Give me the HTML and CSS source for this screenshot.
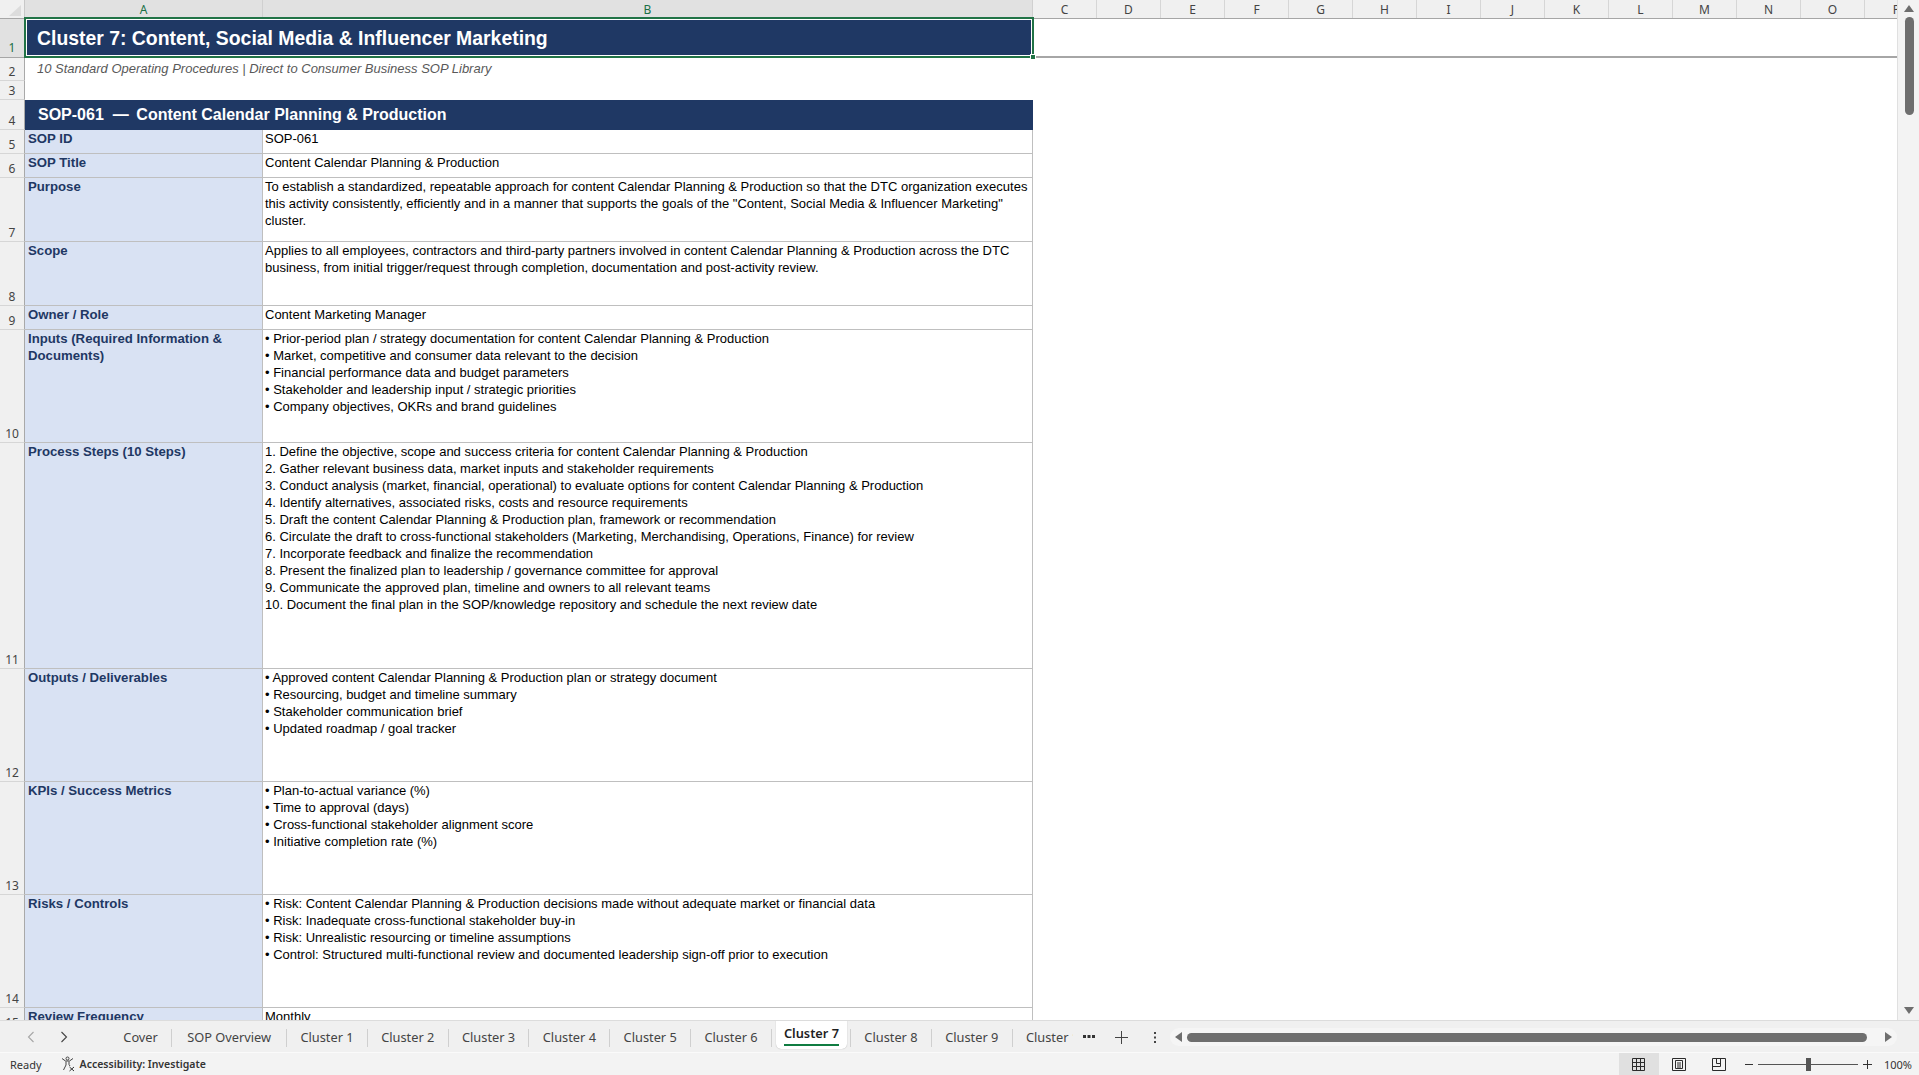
FILE: index.html
```html
<!DOCTYPE html>
<html lang="en">
<head>
    <meta charset="UTF-8">
    <title>Cluster 7 - SOP Library</title>
    <link rel="stylesheet" href="styles.css">
</head>
<body>

<div class="app">
    <div class="sheet-wrap">
        <!-- Worksheet grid -->
        <div class="sheet">
            <div class="corner"><svg width="24" height="19" viewBox="0 0 24 19"><path d="M21 5v11H9z" fill="#dcdcdc"/></svg></div>
            <div class="col-head selected">A</div>
            <div class="col-head selected">B</div>
            <div class="col-rest">
                <span>C</span><span>D</span><span>E</span><span>F</span><span>G</span><span>H</span><span>I</span><span>J</span><span>K</span><span>L</span><span>M</span><span>N</span><span>O</span><span>P</span>
            </div>

            <div class="row-head selected">1</div>
            <div class="title-cell">Cluster 7: Content, Social Media &amp; Influencer Marketing<div class="selection"><i></i></div></div>
            <div class="blank freeze"></div>

            <div class="row-head">2</div>
            <div class="subtitle-cell">10 Standard Operating Procedures | Direct to Consumer Business SOP Library</div>
            <div class="blank"></div>

            <div class="row-head">3</div>
            <div class="empty-cell"></div>
            <div class="blank"></div>

            <div class="row-head">4</div>
            <div class="section-cell">SOP-061&nbsp; —&nbsp;&#8201;Content Calendar Planning &amp; Production</div>
            <div class="blank"></div>

            <div class="row-head">5</div>
            <div class="label">SOP ID</div>
            <div class="value">SOP-061</div>
            <div class="blank"></div>

            <div class="row-head">6</div>
            <div class="label">SOP Title</div>
            <div class="value">Content Calendar Planning &amp; Production</div>
            <div class="blank"></div>

            <div class="row-head">7</div>
            <div class="label">Purpose</div>
            <div class="value">To establish a standardized, repeatable approach for content Calendar Planning &amp; Production so that the DTC organization executes<br>this activity consistently, efficiently and in a manner that supports the goals of the "Content, Social Media &amp; Influencer Marketing"<br>cluster.</div>
            <div class="blank"></div>

            <div class="row-head">8</div>
            <div class="label">Scope</div>
            <div class="value">Applies to all employees, contractors and third-party partners involved in content Calendar Planning &amp; Production across the DTC<br>business, from initial trigger/request through completion, documentation and post-activity review.</div>
            <div class="blank"></div>

            <div class="row-head">9</div>
            <div class="label">Owner / Role</div>
            <div class="value">Content Marketing Manager</div>
            <div class="blank"></div>

            <div class="row-head">10</div>
            <div class="label">Inputs (Required Information &amp;<br>Documents)</div>
            <div class="value">• Prior-period plan / strategy documentation for content Calendar Planning &amp; Production<br>• Market, competitive and consumer data relevant to the decision<br>• Financial performance data and budget parameters<br>• Stakeholder and leadership input / strategic priorities<br>• Company objectives, OKRs and brand guidelines</div>
            <div class="blank"></div>

            <div class="row-head">11</div>
            <div class="label">Process Steps (10 Steps)</div>
            <div class="value">1. Define the objective, scope and success criteria for content Calendar Planning &amp; Production<br>2. Gather relevant business data, market inputs and stakeholder requirements<br>3. Conduct analysis (market, financial, operational) to evaluate options for content Calendar Planning &amp; Production<br>4. Identify alternatives, associated risks, costs and resource requirements<br>5. Draft the content Calendar Planning &amp; Production plan, framework or recommendation<br>6. Circulate the draft to cross-functional stakeholders (Marketing, Merchandising, Operations, Finance) for review<br>7. Incorporate feedback and finalize the recommendation<br>8. Present the finalized plan to leadership / governance committee for approval<br>9. Communicate the approved plan, timeline and owners to all relevant teams<br>10. Document the final plan in the SOP/knowledge repository and schedule the next review date</div>
            <div class="blank"></div>

            <div class="row-head">12</div>
            <div class="label">Outputs / Deliverables</div>
            <div class="value">• Approved content Calendar Planning &amp; Production plan or strategy document<br>• Resourcing, budget and timeline summary<br>• Stakeholder communication brief<br>• Updated roadmap / goal tracker</div>
            <div class="blank"></div>

            <div class="row-head">13</div>
            <div class="label">KPIs / Success Metrics</div>
            <div class="value">• Plan-to-actual variance (%)<br>• Time to approval (days)<br>• Cross-functional stakeholder alignment score<br>• Initiative completion rate (%)</div>
            <div class="blank"></div>

            <div class="row-head">14</div>
            <div class="label">Risks / Controls</div>
            <div class="value">• Risk: Content Calendar Planning &amp; Production decisions made without adequate market or financial data<br>• Risk: Inadequate cross-functional stakeholder buy-in<br>• Risk: Unrealistic resourcing or timeline assumptions<br>• Control: Structured multi-functional review and documented leadership sign-off prior to execution</div>
            <div class="blank"></div>

            <div class="row-head">15</div>
            <div class="label">Review Frequency</div>
            <div class="value">Monthly</div>
            <div class="blank"></div>
        </div>

        <!-- Vertical scrollbar -->
        <div class="vscroll">
            <svg class="arrow" width="10" height="7" viewBox="0 0 10 7"><path d="M5 0l5 7H0z"/></svg>
            <div class="vthumb"></div>
            <svg class="arrow arrow-down" width="10" height="7" viewBox="0 0 10 7"><path d="M0 0h10L5 7z"/></svg>
        </div>
    </div>

    <!-- Sheet tabs -->
    <div class="tabbar">
        <div class="tab-nav">
            <svg width="8" height="12" viewBox="0 0 8 12"><path d="M6.500 1L1.500 6l5 5" fill="none" stroke="#a6a6a6" stroke-width="1.1"/></svg>
            <svg width="8" height="12" viewBox="0 0 8 12"><path d="M1.500 1l5 5-5 5" fill="none" stroke="#444" stroke-width="1.1"/></svg>
        </div>
        <div class="tabs">
            <div class="tab">Cover</div>
            <div class="tab wide">SOP Overview</div>
            <div class="tab">Cluster 1</div>
            <div class="tab">Cluster 2</div>
            <div class="tab">Cluster 3</div>
            <div class="tab">Cluster 4</div>
            <div class="tab">Cluster 5</div>
            <div class="tab before-active">Cluster 6</div>
            <div class="tab active">Cluster 7</div>
            <div class="tab after-active">Cluster 8</div>
            <div class="tab">Cluster 9</div>
            <div class="tab">Cluster 10</div>
        </div>
        <div class="tab-tools">
            <svg width="12" height="4" viewBox="0 0 12 4"><path d="M0 0h3v3H0zM4.500 0h3v3h-3zM9 0h3v3H9z" fill="#333"/></svg>
            <svg width="13" height="13" viewBox="0 0 13 13"><path d="M6.500 0v13M0 6.500h13" stroke="#444" stroke-width="1"/></svg>
            <svg class="kebab" width="2" height="11" viewBox="0 0 2 11"><path d="M0 0h2v2H0zM0 4.500h2v2H0zM0 9h2v2H0z" fill="#444"/></svg>
        </div>
        <div class="hscroll">
            <svg width="7" height="10" viewBox="0 0 7 10"><path d="M7 0v10L0 5z" fill="#6e6e6e"/></svg>
            <div class="hthumb"></div>
            <svg width="7" height="10" viewBox="0 0 7 10"><path d="M0 0l7 5-7 5z" fill="#6e6e6e"/></svg>
        </div>
    </div>

    <!-- Status bar -->
    <div class="statusbar">
        <span class="ready">Ready</span>
        <span class="access">
            <svg width="15" height="16" viewBox="0 0 15 16" fill="none" stroke="#444" stroke-width="1"><circle cx="6.500" cy="2.500" r="1.500"/><path d="M1 2.500l3.500 2.500h4L12 2.500M5 5.500v3.500L2.500 14M8 5.500v3L9 10"/><path d="M8.500 11l4.500 4M13 11l-4.500 4" stroke="#333"/></svg>
            Accessibility: Investigate
        </span>
        <div class="views">
            <div class="view on"><svg width="13" height="13" viewBox="0 0 13 13" fill="none" stroke="#2b2b2b"><path d="M.5 .5h12v12H.5zM.5 4.500h12M.5 8.500h12M4.500 .5v12M8.500 .5v12"/></svg></div>
            <div class="view"><svg width="14" height="13" viewBox="0 0 14 13" fill="none" stroke="#2b2b2b"><path d="M.5 .5h13v12H.5zM3.500 2.500h7v8h-7zM5 5h4M5 7h4M5 9h4"/></svg></div>
            <div class="view"><svg width="14" height="13" viewBox="0 0 14 13" fill="none" stroke="#2b2b2b"><path d="M.5 .5h13v12H.5zM.5 8.500h8V.5M4.500 .5v5h4"/></svg></div>
        </div>
        <div class="zoom">
            <svg width="8" height="1" viewBox="0 0 8 1"><path d="M0 .5h8" stroke="#333"/></svg>
            <div class="slider"><i></i></div>
            <svg width="9" height="9" viewBox="0 0 9 9"><path d="M4.500 0v9M0 4.500h9" stroke="#333"/></svg>
            <span class="zoom-val">100%</span>
        </div>
    </div>
</div>

</body>
</html>
```

FILE: styles.css
```css
* {
    box-sizing: border-box;
}
html, body {
    margin: 0;
    height: 100%;
    overflow: hidden;
}
body {
    background-color: #fff;
    font-family: "Liberation Sans", Arial, sans-serif;
    font-size: 13px;
    color: #000;
}
.app {
    display: flex;
    flex-direction: column;
    height: 100vh;
}
.sheet-wrap {
    display: flex;
    height: 1021px;
    overflow: hidden;
    border-bottom: 1px solid #dcdcdc;
}

/* grid */
.sheet {
    flex: 1;
    min-width: 0;
    display: grid;
    grid-template-columns: 25px 238px 770px 1fr;
    grid-template-rows: 19px 39px 23px 19px 30px 24px 24px 64px 64px 24px 113px 226px 113px 113px 113px 24px;
    overflow: hidden;
}
.corner {
    background-color: #f0f0f0;
    border-right: 1px solid #c8c8c8;
    border-bottom: 1px solid #a6a6a6;
}
.corner svg {
    display: block;
}
.col-head {
    padding-top: 1px;
    background-color: #f0f0f0;
    border-right: 1px solid #d0d0d0;
    border-bottom: 1px solid #a6a6a6;
    font-family: "Noto Sans", sans-serif;
    font-size: 12px;
    line-height: 17px;
    text-align: center;
    color: #444;
}
.col-head.selected {
    background-color: #e1e1e1;
    color: #1a7046;
}
.col-rest {
    display: flex;
    overflow: hidden;
    background-color: #f0f0f0;
    border-bottom: 1px solid #a6a6a6;
}
.col-rest span {
    flex: 0 0 64px;
    padding-top: 1px;
    border-right: 1px solid #d6d6d6;
    font-family: "Noto Sans", sans-serif;
    font-size: 12px;
    line-height: 17px;
    text-align: center;
    color: #444;
}
.row-head {
    display: flex;
    align-items: flex-end;
    justify-content: center;
    background-color: #f0f0f0;
    border-right: 1px solid #a9a9a9;
    border-bottom: 1px solid #d6d6d6;
    font-family: "Noto Sans", sans-serif;
    font-size: 12px;
    line-height: 17px;
    color: #444;
}
.row-head.selected {
    padding-bottom: 1px;
    background-color: #e1e1e1;
    color: #1a7046;
    border-bottom-color: #a6a6a6;
}
.title-cell {
    grid-column: 2 / 4;
    position: relative;
    display: flex;
    align-items: center;
    padding-left: 12px;
    background-color: #1f3864;
    color: #fff;
    font-size: 19.4px;
    font-weight: bold;
}
.selection {
    position: absolute;
    inset: -2px -1px 0 -1px;
    border: 2px solid #217346;
    outline: 1px solid #fff;
    outline-offset: -3px;
}
.selection i {
    position: absolute;
    right: -4px;
    bottom: -4px;
    width: 6px;
    height: 6px;
    background-color: #217346;
    border: 1px solid #fff;
}
.subtitle-cell {
    grid-column: 2 / 4;
    padding: 2px 0 0 12px;
    color: #595959;
    font-style: italic;
    line-height: 17px;
}
.empty-cell {
    grid-column: 2 / 4;
}
.section-cell {
    grid-column: 2 / 4;
    display: flex;
    align-items: center;
    padding-left: 13px;
    background-color: #1f3864;
    color: #fff;
    font-size: 16px;
    font-weight: bold;
    white-space: pre;
}
.label {
    padding: 0 3px;
    background-color: #d9e2f3;
    border-right: 1px solid #bfbfbf;
    border-bottom: 1px solid #bfbfbf;
    color: #1f3864;
    font-size: 13.2px;
    font-weight: bold;
    line-height: 17px;
}
.value {
    padding: 0 2px;
    border-right: 1px solid #bfbfbf;
    border-bottom: 1px solid #bfbfbf;
    line-height: 17px;
    white-space: nowrap;
    overflow: hidden;
}
.freeze {
    border-bottom: 2px solid #a6a6a6;
}

/* scrollbars */
.vscroll {
    flex: 0 0 22px;
    display: flex;
    flex-direction: column;
    align-items: center;
    padding: 5px 0 6px 1px;
    background-color: #f3f3f3;
    border-left: 1px solid #e0e0e0;
}
.arrow {
    fill: #6e6e6e;
}
.arrow-down {
    margin-top: auto;
}
.vthumb {
    width: 9px;
    height: 98px;
    margin-top: 5px;
    border-radius: 5px;
    background-color: #6e6e6e;
}

/* tabs */
.tabbar {
    display: flex;
    align-items: flex-start;
    height: 32px;
    background-color: #f0f0f0;
    border-bottom: 1px solid #fafafa;
    font-family: "Noto Sans", sans-serif;
    font-size: 12.8px;
    color: #444;
}
.tab-nav {
    flex: 0 0 110px;
    display: flex;
    gap: 25px;
    padding: 10px 0 0 27px;
}
.tabs {
    flex: 0 0 963px;
    display: flex;
    overflow: hidden;
    height: 32px;
}
.tab {
    flex: none;
    height: 18px;
    margin-top: 8px;
    padding: 0 13.3px;
    border-right: 1px solid #cfcfcf;
    line-height: 17px;
}
.tab.wide {
    padding: 0 15px;
}
.tab.before-active {
    margin-right: 4px;
}
.tab.after-active {
    border-left: 1px solid #cfcfcf;
}
.tab.active {
    height: 28px;
    margin: 0 3px 0 0;
    padding: 4px 8px 0;
    border: none;
    border-radius: 0 0 5px 5px;
    background-color: #fff;
    box-shadow: 0 0 1px #999;
    color: #1f1f1f;
    font-weight: 600;
    position: relative;
}
.tab.active::after {
    content: "";
    position: absolute;
    left: 8px;
    right: 8px;
    bottom: 3px;
    height: 2px;
    background-color: #107c41;
}
.tab-tools {
    flex: 0 0 97px;
    display: flex;
    align-items: center;
    gap: 20px;
    height: 32px;
    padding-left: 10px;
}
.kebab {
    margin-left: 6px;
}
.hscroll {
    flex: 0 0 727px;
    display: flex;
    align-items: center;
    gap: 5px;
    height: 18px;
    margin-top: 7px;
    padding: 0 5px;
    border-radius: 9px;
    background-color: #f5f5f5;
}
.hthumb {
    flex: 1;
    height: 9px;
    border-radius: 5px;
    background-color: #6e6e6e;
    margin-right: 13px;
}

/* status bar */
.statusbar {
    flex: 1;
    display: flex;
    align-items: center;
    background-color: #f3f3f3;
    font-family: "Noto Sans", sans-serif;
    font-size: 11px;
    color: #333;
}
.ready {
    margin-left: 10px;
}
.access {
    display: flex;
    align-items: center;
    gap: 4px;
    margin-left: 19px;
    font-weight: 600;
    font-size: 10.5px;
}
.views {
    display: flex;
    align-self: stretch;
    margin-left: auto;
}
.view {
    width: 40px;
    display: flex;
    align-items: center;
    justify-content: center;
}
.view.on {
    background-color: #e0e0e0;
}
.zoom {
    display: flex;
    align-items: center;
    gap: 5px;
    margin: 0 7px 0 6px;
}
.slider {
    position: relative;
    width: 100px;
    height: 1px;
    background-color: #555;
}
.slider i {
    position: absolute;
    left: 48px;
    top: -6px;
    width: 5px;
    height: 13px;
    background-color: #555;
}
.zoom-val {
    margin-left: 7px;
    font-size: 11px;
}
```
